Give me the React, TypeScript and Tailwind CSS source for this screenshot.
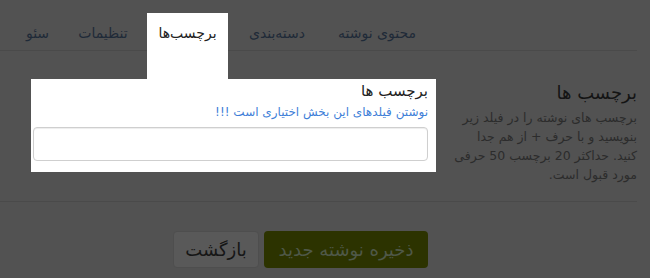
const tabs = [
  { label: 'محتوی نوشته', width: 'w-[110px]' },
  { label: 'دسته‌بندی', width: 'w-[90px]' },
  { label: 'برچسب‌ها', width: 'w-[81px]', active: true },
  { label: 'تنظیمات', width: 'w-[88px]' },
  { label: 'سئو', width: 'w-[43px]' },
]

const App = () => {
  return (
    <div
      dir="rtl"
      className="h-[278px] w-[650px] overflow-hidden bg-[#525252] pr-[13px] font-['DejaVu_Sans',sans-serif]"
    >
      {/* tabs */}
      <ul className="flex border-b border-[#4a4a4a] pr-[205px] pt-[13px]">
        {tabs.map((tab) =>
          tab.active ? (
            <li
              key={tab.label}
              className={`relative z-10 -mb-[29px] mr-[4px] h-[66px] ${tab.width} bg-white pt-[10px] text-center text-[14px] leading-[20px] text-[#222]`}
            >
              {tab.label}
            </li>
          ) : (
            <li
              key={tab.label}
              className={`h-[37px] ${tab.width} pt-[10px] text-center text-[14px] leading-[20px] text-[#1f2a38]`}
            >
              {tab.label}
            </li>
          ),
        )}
      </ul>

      {/* content row */}
      <div className="flex items-start pt-[28px]">
        <div className="w-[185px] shrink-0 pt-[2px]">
          <h3 className="text-[18px] leading-[24px] text-[#141414]">برچسب ها</h3>
          <p className="mt-[3px] text-[12.5px] leading-[19px] text-[#2c2c2c]">
            برچسب های نوشته را در فیلد زیر
            <br />
            بنویسید و با حرف + از هم جدا
            <br />
            کنید. حداکثر 20 برچسب 50 حرفی
            <br />
            مورد قبول است.
          </p>
        </div>
        <div className="mr-[16px] w-[405px] bg-white pb-[11px] pl-[2px] pr-[8px] pt-[1px]">
          <label className="block text-[15px] leading-[22px] text-[#222]">برچسب ها</label>
          <p className="text-[12px] leading-[20px] text-[#3f7fd8]">نوشتن فیلدهای این بخش اختیاری است !!!</p>
          <input
            type="text"
            className="mt-[5px] block h-[34px] w-full rounded-[4px] border border-[#cfcfcf] bg-white px-3 shadow-[inset_0_1px_1px_rgba(0,0,0,0.075)] outline-none"
          />
        </div>
      </div>

      <hr className="mt-[17px] border-t border-[#4a4a4a]" />

      {/* actions */}
      <div className="flex gap-[5px] pr-[209px] pt-[29px]">
        <button
          type="button"
          className="h-[37px] w-[164px] rounded-[4px] bg-[#2c3300] text-[18px] text-[#4f5848]"
        >
          ذخیره نوشته جدید
        </button>
        <button
          type="button"
          className="h-[37px] w-[86px] rounded-[4px] border border-[#4e4e4e] bg-[#595959] text-[18px] text-[#161616]"
        >
          بازگشت
        </button>
      </div>
    </div>
  )
}

export default App
